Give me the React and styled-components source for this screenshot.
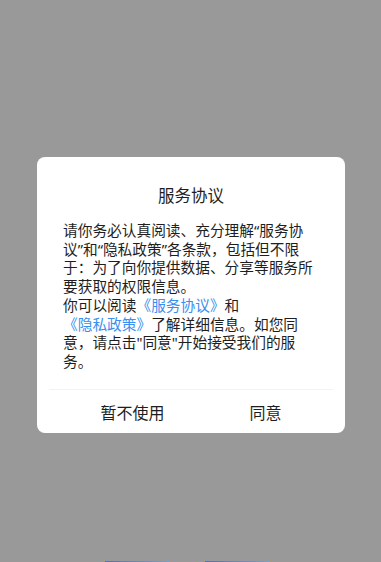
import styled, { createGlobalStyle } from "styled-components";

const GlobalStyle = createGlobalStyle`
    html, body {
        margin: 0;
        padding: 0;
        background: #999999;
    }
    * {
        box-sizing: border-box;
    }
`;

export default function App() {
    return (
        <>
            <GlobalStyle />
            <Screen>
                {/* 협의 다이얼로그 */}
                <Dialog>
                    <Title>服务协议</Title>
                    <Body>
                        请你务必认真阅读、充分理解“服务协议”和“隐私政策”各条款，包括但不限于：为了向你提供数据、分享等服务所要获取的权限信息。
                        <br />
                        你可以阅读<Link>《服务协议》</Link>和<Link>《隐私政策》</Link>了解详细信息。如您同意，请点击"同意"开始接受我们的服务。
                    </Body>
                    <Divider />
                    <Actions>
                        <ActionButton>暂不使用</ActionButton>
                        <ActionButton>同意</ActionButton>
                    </Actions>
                </Dialog>

                {/* 아래에 가려진 버튼 */}
                <Peek>
                    <PeekBar />
                    <PeekBar />
                </Peek>
            </Screen>
        </>
    );
}

const Screen = styled.div`
    width: 100%;
    height: 100vh;
    display: flex;
    flex-direction: column;
    align-items: flex-start;
    padding-top: 157px;
    padding-left: 37px;
    font-family: "Noto Sans", "Noto Sans CJK SC", sans-serif;
    color: #1e1e1e;
`;

const Dialog = styled.div`
    width: 308px;
    height: 276px;
    background: #ffffff;
    border-radius: 8px;
    display: flex;
    flex-direction: column;
`;

const Title = styled.div`
    padding-top: 27px;
    height: 51px;
    font-size: 16.5px;
    line-height: 24px;
    text-align: center;
`;

const Body = styled.div`
    margin-top: 13px;
    margin-left: 26px;
    width: 254px;
    font-size: 14.7px;
    line-height: 18.7px;
`;

const Link = styled.span`
    white-space: nowrap;
    color: #3a8ef0;
`;

const Divider = styled.div`
    margin: auto 12px 0;
    height: 1px;
    background: #f3f3f3;
`;

const Actions = styled.div`
    height: 43px;
    display: grid;
    grid-template-columns: 133px 133px;
    padding-left: 29px;
`;

const ActionButton = styled.div`
    display: flex;
    align-items: center;
    justify-content: center;
    font-size: 16px;
    color: #1e1e1e;
`;

const Peek = styled.div`
    margin-top: auto;
    margin-left: 68px;
    height: 1px;
    display: flex;
    gap: 35px;
`;

const PeekBar = styled.div`
    width: 65px;
    height: 1px;
    background: linear-gradient(90deg, #4a6ee0, #5aa8f2);
`;
